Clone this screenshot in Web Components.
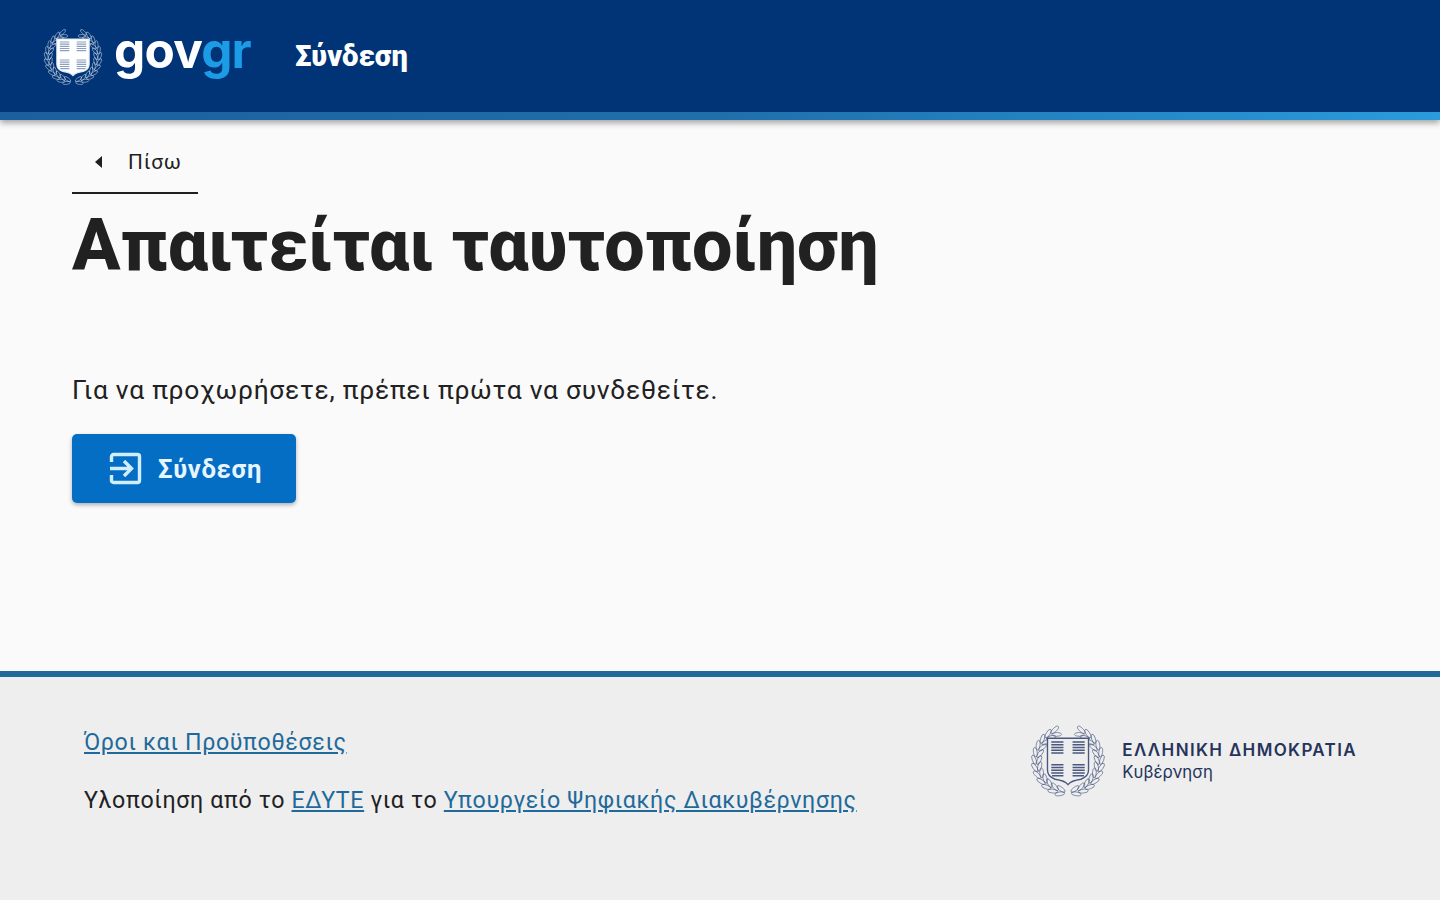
<!DOCTYPE html>
<html lang="el">
<head>
<meta charset="utf-8">
<title>Σύνδεση</title>
<style>
  html, body { margin: 0; height: 100%; }
  body { font-family: Roboto, "Noto Sans", sans-serif; background: #fafafa; color: #1f1f1f; }
  .page { height: 900px; display: flex; flex-direction: column; overflow: hidden; }
</style>
</head>
<body>
<div class="page">
  <gov-header title-text="Σύνδεση"></gov-header>
  <gov-main>
    <back-link slot="back">Πίσω</back-link>
    <h-title slot="title">Απαιτείται ταυτοποίηση</h-title>
    <span slot="text">Για να προχωρήσετε, πρέπει πρώτα να συνδεθείτε.</span>
    <login-button slot="action">Σύνδεση</login-button>
  </gov-main>
  <gov-footer></gov-footer>
</div>

<script>
// one branch of the wreath, right side, bottom to top. mirrored for the left one
function wreathBranch() {
  let out = "";
  for (let deg = 14; deg <= 166; deg += 13) {
    let a = deg * Math.PI / 180;
    let tangent = 90 - deg;
    for (let [r, lean] of [[44.500, 22], [38, -22]]) {
      let x = (50 + r * Math.sin(a)).toFixed(1);
      let y = (50 + r * Math.cos(a)).toFixed(1);
      out += `<ellipse cx="${x}" cy="${y}" rx="2.500" ry="6.400" transform="rotate(${tangent + lean} ${x} ${y})"/>`;
    }
  }
  return out;
}

class GovEmblem extends HTMLElement {
  constructor() {
    super();
    const branch = wreathBranch();
    this.attachShadow({ mode: "open" });
    this.shadowRoot.innerHTML = /* html */ `
      <style>
        :host { display: inline-block; line-height: 0; color: var(--emblem-line, #fff); }
        svg { width: 100%; height: 100%; }
      </style>
      <svg viewBox="0 0 100 100" fill="none">
        <g stroke="currentColor" stroke-width="0.800">
          <g>${branch}</g>
          <g transform="matrix(-1 0 0 1 100 0)">${branch}</g>
        </g>
        <path d="M23 20h54v42c0 7-4 10-10 12-7 1-13 2-17 7-4-5-10-6-17-7-6-2-10-5-10-12z" fill="var(--emblem-fill, #fff)" stroke="currentColor" stroke-width="1.800"/>
        <g stroke="var(--emblem-bars, #7f95b8)" stroke-width="1.900">
          <path d="M28 25h16M28 28.600h16M28 32.200h16M28 35.800h16M28 39.400h16M56 25h16M56 28.600h16M56 32.200h16M56 35.800h16M56 39.400h16"/>
          <path d="M28 55h16M28 58.600h16M28 62.200h16M28 65.800h16M29 69.400h15M56 55h16M56 58.600h16M56 62.200h16M56 65.800h16M56 69.400h15"/>
        </g>
      </svg>`;
  }
}
customElements.define("gov-emblem", GovEmblem);

class GovHeader extends HTMLElement {
  constructor() {
    super();
    this.attachShadow({ mode: "open" });
    this.shadowRoot.innerHTML = /* html */ `
      <style>
        :host {
          display: block;
          flex: none;
          position: relative;
          z-index: 2;
          box-shadow: 0 3px 6px rgba(0, 0, 0, 0.35);
        }
        .bar {
          height: 112px;
          box-sizing: border-box;
          background: #003476;
          display: flex;
          align-items: center;
          padding-left: 43px;
        }
        .stripe {
          height: 8px;
          background: linear-gradient(90deg, #1c5f9e, #1f6fab 50%, #2a9bdc);
        }
        gov-emblem {
          width: 60px;
          height: 60px;
          margin-top: 2px;
          --emblem-line: #dfe7f2;
          --emblem-fill: #fff;
          --emblem-bars: #8aa0c2;
        }
        .word {
          margin-left: 11px;
          margin-top: -12px;
          font-family: Inter, sans-serif;
          font-weight: 700;
          font-size: 49.500px;
          line-height: 60px;
          letter-spacing: -0.800px;
          color: #fff;
        }
        .word span { color: #1c9be6; }
        h1 {
          margin: 0 0 0 44px;
          font-size: 29px;
          font-weight: 900;
          color: #fff;
        }
      </style>
      <div class="bar">
        <gov-emblem></gov-emblem>
        <div class="word">gov<span>gr</span></div>
        <h1>${this.getAttribute("title-text")}</h1>
      </div>
      <div class="stripe"></div>`;
  }
}
customElements.define("gov-header", GovHeader);

class GovMain extends HTMLElement {
  constructor() {
    super();
    this.attachShadow({ mode: "open" });
    this.shadowRoot.innerHTML = /* html */ `
      <style>
        :host {
          display: flex;
          flex-direction: column;
          align-items: flex-start;
          height: 551px;
          flex: none;
          padding-left: 72px;
          box-sizing: border-box;
        }
        .text {
          margin-top: 75px;
          font-size: 26.400px;
          line-height: 38px;
          letter-spacing: 0.740px;
          color: #212121;
        }
        .action { margin-top: 25px; }
      </style>
      <slot name="back"></slot>
      <slot name="title"></slot>
      <div class="text"><slot name="text"></slot></div>
      <div class="action"><slot name="action"></slot></div>`;
  }
}
customElements.define("gov-main", GovMain);

class BackLink extends HTMLElement {
  constructor() {
    super();
    this.attachShadow({ mode: "open" });
    this.shadowRoot.innerHTML = /* html */ `
      <style>
        :host {
          display: flex;
          align-items: center;
          width: 126px;
          height: 74px;
          box-sizing: border-box;
          border-bottom: 2px solid #1f1f1f;
          padding: 11px 0 0 22px;
          font-size: 20.800px;
          letter-spacing: 0.800px;
          color: #1f1f1f;
        }
        svg { width: 9px; height: 14px; margin-right: 25px; }
      </style>
      <svg viewBox="0 0 9 14"><path d="M8 1v12L1 7z" fill="#1f1f1f"/></svg>
      <slot></slot>`;
  }
}
customElements.define("back-link", BackLink);

class HTitle extends HTMLElement {
  constructor() {
    super();
    this.attachShadow({ mode: "open" });
    this.shadowRoot.innerHTML = /* html */ `
      <style>
        :host {
          display: block;
          padding-top: 2px;
          font-size: 71.800px;
          line-height: 100px;
          font-weight: 800;
          color: #212121;
        }
      </style>
      <slot></slot>`;
  }
}
customElements.define("h-title", HTitle);

class LoginButton extends HTMLElement {
  constructor() {
    super();
    this.attachShadow({ mode: "open" });
    this.shadowRoot.innerHTML = /* html */ `
      <style>
        :host { display: inline-block; }
        button {
          display: flex;
          align-items: center;
          gap: 16px;
          width: 224px;
          height: 69px;
          padding: 0 0 0 37px;
          box-sizing: border-box;
          border: 0;
          border-radius: 5px;
          background: #046ec5;
          box-shadow: 0 2px 4px rgba(0, 0, 0, 0.3);
          color: #e6f5ff;
          font: 700 25.600px Roboto, sans-serif;
          letter-spacing: 0.700px;
        }
        svg { width: 33px; height: 33px; flex: none; }
      </style>
      <button>
        <svg viewBox="0 0 33 33" fill="none" stroke="#cfeeff" stroke-width="3.400">
          <path d="M2.500 10V4.500a2 2 0 0 1 2-2h24a2 2 0 0 1 2 2v24a2 2 0 0 1-2 2h-24a2 2 0 0 1-2-2V23"/>
          <path d="M1 16.500h22M15 9l7.500 7.500L15 24"/>
        </svg>
        <slot></slot>
      </button>`;
  }
}
customElements.define("login-button", LoginButton);

class GovFooter extends HTMLElement {
  constructor() {
    super();
    this.attachShadow({ mode: "open" });
    this.shadowRoot.innerHTML = /* html */ `
      <style>
        :host {
          display: flex;
          justify-content: space-between;
          flex: 1;
          border-top: 6px solid #1f6a9a;
          background: #eee;
          padding: 50px 83px 0 84px;
          font-size: 23.200px;
          letter-spacing: 0.650px;
          color: #212121;
        }
        p { margin: 0 0 28px; line-height: 30px; }
        a { color: #1f6a9a; text-decoration: underline; }
        .brand { display: flex; align-items: flex-start; gap: 16px; margin-top: -4px; letter-spacing: 0; }
        gov-emblem {
          width: 76px;
          height: 76px;
          --emblem-line: #4a5880;
          --emblem-fill: #eee;
          --emblem-bars: #4a5880;
        }
        .names { padding-top: 16px; color: #26345c; }
        .names b {
          display: block;
          font: 600 17px/22px Inter, sans-serif;
          letter-spacing: 1.360px;
        }
        .names span {
          display: block;
          font: 400 16.800px/22px Inter, sans-serif;
        }
      </style>
      <div class="links">
        <p><a href="#">Όροι και Προϋποθέσεις</a></p>
        <p>Υλοποίηση από το <a href="#">ΕΔΥΤΕ</a> για το <a href="#">Υπουργείο Ψηφιακής Διακυβέρνησης</a></p>
      </div>
      <div class="brand">
        <gov-emblem></gov-emblem>
        <div class="names"><b>ΕΛΛΗΝΙΚΗ ΔΗΜΟΚΡΑΤΙΑ</b><span>Κυβέρνηση</span></div>
      </div>`;
  }
}
customElements.define("gov-footer", GovFooter);
</script>
</body>
</html>
